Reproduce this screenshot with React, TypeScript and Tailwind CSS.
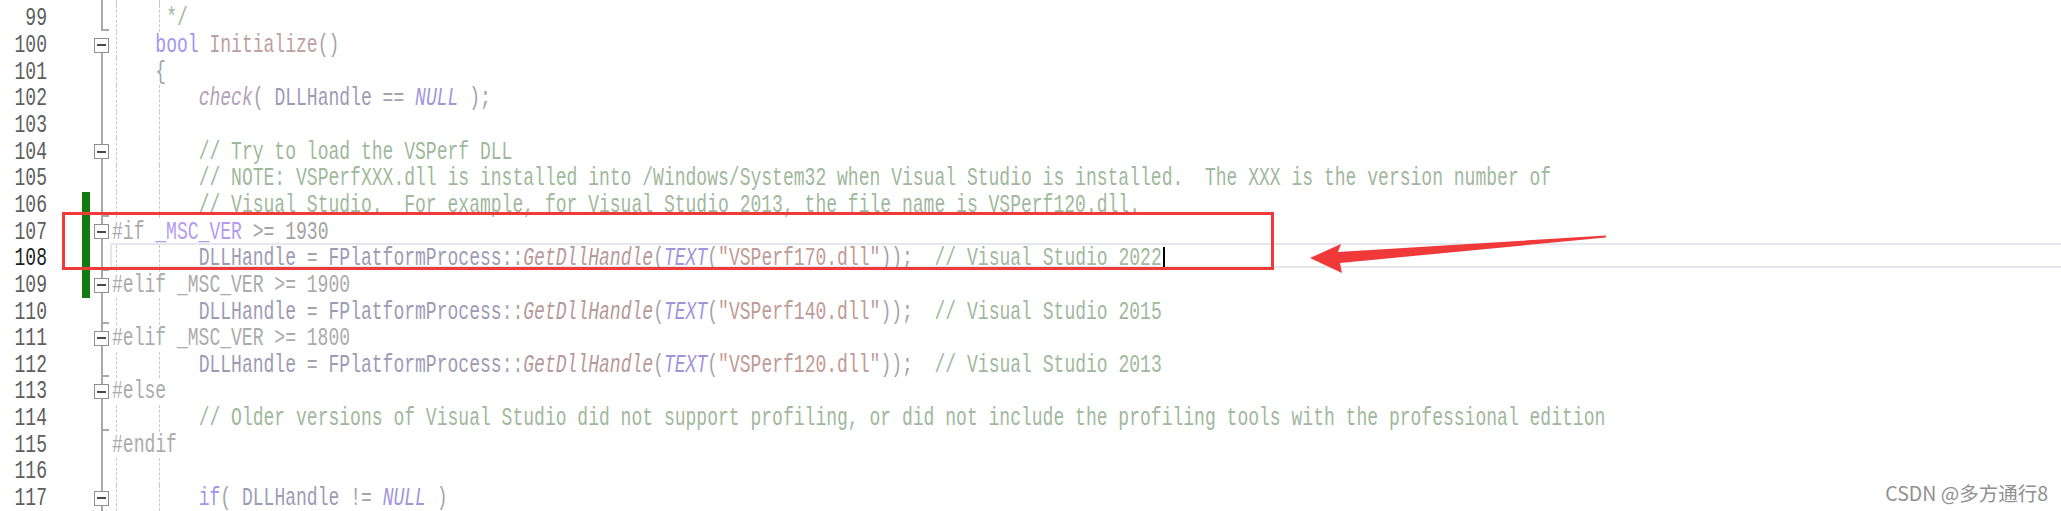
import React from "react";

type Fold = "full" | "top" | "bottom";

type Row = {
  n: number;
  guides?: number[];
  toks?: [string, string][];
  fold: Fold;
  box?: boolean;
  tick?: boolean;
  green?: boolean;
  current?: boolean;
};

// token colours (faded VS theme)
const COM = "text-[#9fb89c]";
const ID = "text-[#9d9bb4]";
const PUN = "text-[#a3a3ab]";
const KW = "text-[#a196ee]";
const FN = "text-[#bd9f9f]";
const IT = "italic text-[#b6989a]";
const CHK = "italic text-[#b2a0b8]";
const MAC = "italic text-[#a294da]";
const STR = "text-[#c09a96]";
const PP = "text-[#ababab]";
const MV = "text-[#b39bf2]";
const NUM = "text-[#a2a2a2]";

const loadLine = (dll: string, year: string): [string, string][] => [
  ["DLLHandle", ID],
  [" = ", PUN],
  ["FPlatformProcess", ID],
  ["::", PUN],
  ["GetDllHandle", IT],
  ["(", PUN],
  ["TEXT", MAC],
  ["(", PUN],
  [`"${dll}"`, STR],
  ["));", PUN],
  ["  ", PUN],
  [`// Visual Studio ${year}`, COM],
];

const rows: Row[] = [
  { n: 99, guides: [4, 1], toks: [["*/", COM]], fold: "top", tick: true },
  { n: 100, guides: [4], toks: [["bool", KW], [" ", PUN], ["Initialize", FN], ["()", PUN]], fold: "bottom", box: true },
  { n: 101, guides: [4], toks: [["{", PUN]], fold: "full" },
  {
    n: 102,
    guides: [4, 4],
    toks: [["check", CHK], ["( ", PUN], ["DLLHandle", ID], [" == ", PUN], ["NULL", MAC], [" );", PUN]],
    fold: "full",
  },
  { n: 103, guides: [4, 4], fold: "full" },
  { n: 104, guides: [4, 4], toks: [["// Try to load the VSPerf DLL", COM]], fold: "full", box: true },
  {
    n: 105,
    guides: [4, 4],
    toks: [
      [
        "// NOTE: VSPerfXXX.dll is installed into /Windows/System32 when Visual Studio is installed.  The XXX is the version number of",
        COM,
      ],
    ],
    fold: "full",
  },
  {
    n: 106,
    guides: [4, 4],
    toks: [["// Visual Studio.  For example, for Visual Studio 2013, the file name is VSPerf120.dll.", COM]],
    fold: "full",
    tick: true,
    green: true,
  },
  {
    n: 107,
    toks: [["#if", PP], [" ", PUN], ["_MSC_VER", MV], [" >= ", PUN], ["1930", NUM]],
    fold: "full",
    box: true,
    green: true,
  },
  { n: 108, guides: [4, 4], toks: loadLine("VSPerf170.dll", "2022"), fold: "full", tick: true, green: true, current: true },
  { n: 109, toks: [["#elif _MSC_VER >= 1900", PP]], fold: "full", box: true, green: true },
  { n: 110, guides: [4, 4], toks: loadLine("VSPerf140.dll", "2015"), fold: "full", tick: true },
  { n: 111, toks: [["#elif _MSC_VER >= 1800", PP]], fold: "full", box: true },
  { n: 112, guides: [4, 4], toks: loadLine("VSPerf120.dll", "2013"), fold: "full", tick: true },
  { n: 113, toks: [["#else", PP]], fold: "full", box: true },
  {
    n: 114,
    guides: [4, 4],
    toks: [
      [
        "// Older versions of Visual Studio did not support profiling, or did not include the profiling tools with the professional edition",
        COM,
      ],
    ],
    fold: "full",
    tick: true,
  },
  { n: 115, toks: [["#endif", PP]], fold: "full" },
  { n: 116, guides: [4, 4], fold: "full" },
  {
    n: 117,
    guides: [4, 4],
    toks: [["if", KW], ["( ", PUN], ["DLLHandle", ID], [" != ", PUN], ["NULL", MAC], [" )", PUN]],
    fold: "full",
    box: true,
  },
];

function Guide({ chars }: { chars: number }) {
  return (
    <span className={`flex h-full shrink-0 ${chars === 4 ? "w-[43.32px]" : "w-[10.83px]"}`}>
      <span className="ml-[4px] h-full border-l border-dashed border-[#c9c9c9]" />
    </span>
  );
}

function FoldCell({ row }: { row: Row }) {
  return (
    <div className="relative w-[20px] shrink-0 self-stretch">
      {row.fold === "full" && <div className="absolute left-[11px] top-0 bottom-0 w-[2px] bg-[#a9a9a9]" />}
      {row.fold === "top" && <div className="absolute left-[11px] top-0 bottom-[2px] w-[2px] bg-[#a9a9a9]" />}
      {row.fold === "bottom" && <div className="absolute left-[11px] top-[13px] bottom-0 w-[2px] bg-[#a9a9a9]" />}
      {row.tick && <div className="absolute left-[11px] bottom-[1px] w-[8px] h-[2px] bg-[#a9a9a9]" />}
      {row.box && (
        <div className="absolute left-[4px] top-[6px] flex h-[15px] w-[15px] items-center justify-center border border-[#8f8f8f] bg-white">
          <div className="h-[2px] w-[9px] bg-[#4a4a4a]" />
        </div>
      )}
    </div>
  );
}

function CodeRow({ row }: { row: Row }) {
  return (
    <div className="flex h-[26.67px]">
      <div className="flex w-[47px] shrink-0 items-center justify-end">
        <span className={`inline-block scale-y-[1.4] leading-none ${row.current ? "text-[#1e1e1e]" : "text-[#5e5e5e]"}`}>
          {row.n}
        </span>
      </div>
      <div className="w-[35px] shrink-0" />
      <div className={`w-[8px] shrink-0 ${row.green ? "bg-[#117a11]" : ""}`} />
      <FoldCell row={row} />
      <div className="relative flex min-w-0 flex-1 items-center pl-[2px]">
        {row.current && (
          <div className="absolute left-0 right-[-4px] top-[-2px] h-[25px] border-2 border-[#e6e6ee]" />
        )}
        {row.guides?.map((g, i) => (
          <Guide key={i} chars={g} />
        ))}
        {row.toks && (
          <span className="relative inline-block scale-y-[1.4] whitespace-pre leading-none">
            {row.toks.map(([t, c], i) => (
              <span key={i} className={c}>
                {t}
              </span>
            ))}
          </span>
        )}
        {row.current && <span className="relative ml-[1px] inline-block h-[22px] w-[2px] bg-black" />}
      </div>
    </div>
  );
}

export default function App() {
  return (
    <div className="relative h-[511px] w-[2061px] overflow-hidden bg-white font-['Liberation_Mono',monospace] text-[18.05px]">
      {/* partial line above 99 */}
      <div className="flex h-[5px]">
        <div className="w-[90px] shrink-0" />
        <div className="relative w-[20px] shrink-0">
          <div className="absolute left-[11px] top-0 bottom-0 w-[2px] bg-[#a9a9a9]" />
        </div>
        <div className="flex pl-[2px]">
          <Guide chars={4} />
          <Guide chars={4} />
        </div>
      </div>

      {rows.map((r) => (
        <CodeRow key={r.n} row={r} />
      ))}

      {/* annotation: red box + arrow */}
      <div className="absolute left-[62px] top-[212px] h-[58px] w-[1212px] border-[3px] border-[#f03a3a]" />
      <svg className="absolute left-0 top-0" width="2061" height="511" viewBox="0 0 2061 511">
        <polygon
          points="1310,258 1341,244 1338,252 1606,235.5 1606,237.5 1340,263 1342,273"
          fill="#f03a3a"
        />
      </svg>

      {/* watermark */}
      <div className="absolute bottom-[9px] right-[13px] font-['Noto_Sans_CJK_SC','Noto_Sans',sans-serif] text-[19.5px] leading-none text-[#909090]">
        CSDN @多方通行8
      </div>
    </div>
  );
}
